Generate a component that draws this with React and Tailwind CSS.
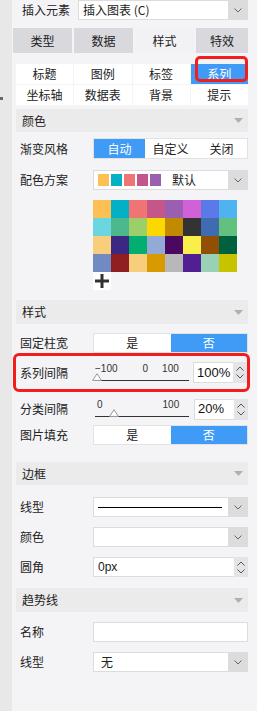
import React from "react";

const palette = [
  ["#fdc055", "#03b0c5", "#f07474", "#c5568a", "#9b5fb1", "#d061d6", "#5b79e8", "#4fb3f0"],
  ["#6bd6e0", "#4cb88c", "#9ccf6a", "#fdd800", "#c28a00", "#333333", "#3f6bb0", "#64c07e"],
  ["#f8ce7c", "#3b2884", "#00af70", "#93aad7", "#4a0860", "#f9ef4a", "#904f05", "#00613f"],
  ["#728ac2", "#8f1f21", "#f8cd7c", "#d89a00", "#b8b8b8", "#511e93", "#99d1b6", "#c8c300"],
];

const Chevron = () => (
  <svg width="8" height="5" viewBox="0 0 8 5">
    <polyline points="0.5,0.5 4,4 7.5,0.5" fill="none" stroke="#666" strokeWidth="1" />
  </svg>
);

const Spinner = () => (
  <div className="w-[14px] self-stretch bg-[#e4e4e6] flex flex-col items-center justify-center gap-[3px]">
    <svg width="8" height="5" viewBox="0 0 8 5">
      <polyline points="0.5,4.5 4,1 7.5,4.5" fill="none" stroke="#555" strokeWidth="1" />
    </svg>
    <svg width="8" height="5" viewBox="0 0 8 5">
      <polyline points="0.5,0.5 4,4 7.5,0.5" fill="none" stroke="#555" strokeWidth="1" />
    </svg>
  </div>
);

const SectionHeader = ({ title, className = "" }) => (
  <div className={`h-[23px] bg-[#ebebeb] flex items-center justify-between pl-[6px] pr-[5px] ${className}`}>
    <span className="text-[12px] text-[#222]">{title}</span>
    <svg width="9" height="5" viewBox="0 0 9 5">
      <polygon points="0,0 9,0 4.5,5" fill="#b0b0b0" />
    </svg>
  </div>
);

const Row = ({ label, children, className = "" }) => (
  <div className={`flex items-center h-[20px] ${className}`}>
    <div className="w-[77px] pl-[4px] text-[12px] text-[#222] shrink-0">{label}</div>
    <div className="flex-1 flex self-stretch">{children}</div>
  </div>
);

const SelectBox = ({ children }) => (
  <div className="flex flex-1 bg-white border border-[#dcdcdc] border-r-0">
    <div className="flex-1 flex items-center pl-[4px] min-w-0">{children}</div>
    <div className="w-[20px] bg-[#dcdcdc] flex items-center justify-center">
      <Chevron />
    </div>
  </div>
);

const Segmented = ({ items, active }) => (
  <div className="flex flex-1 bg-white border border-[#e2e2e2]">
    {items.map((it, i) => (
      <div
        key={it}
        className={`flex-1 flex items-center justify-center text-[12px] ${
          i === active ? "bg-[#3f9bf6] text-white" : "text-[#222]"
        }`}
      >
        {it}
      </div>
    ))}
  </div>
);

const Slider = ({ labels, thumb }) => (
  <div className="relative w-[94px] h-[26px] ml-[2px]">
    <div className="flex text-[10px] leading-[10px] text-[#333] font-['Liberation_Sans',sans-serif] pt-[4px]">
      {labels}
    </div>
    <div className="mt-[6px] h-px bg-[#333]" />
    <svg
      className="absolute top-[13px]"
      style={{ left: thumb }}
      width="10"
      height="8"
      viewBox="0 0 10 8"
    >
      <polygon points="5,0.7 9.4,7.4 0.6,7.4" fill="white" stroke="#999" strokeWidth="1" />
    </svg>
  </div>
);

const NumberBox = ({ value }) => (
  <div className="ml-auto flex h-[21px] self-center">
    <div className="w-[40px] bg-white border border-[#dcdcdc] border-r-0 flex items-center pl-[3px] text-[13px] text-[#111] font-['Liberation_Sans',sans-serif]">
      {value}
    </div>
    <Spinner />
  </div>
);

export default function App() {
  return (
    <div className="flex w-[257px] h-[711px] overflow-hidden font-['Noto_Sans_CJK_SC',sans-serif] text-[#222]">
      <div className="w-[12px] bg-[#e8e8e8] shrink-0">
        <div className="mt-[97px] w-[3px] h-[3px] bg-[#666]" />
      </div>

      <div className="flex-1 bg-[#f4f4f6] pl-[4px] pr-[9px]">
        {/* insert element */}
        <div className="flex items-center h-[20px]">
          <div className="w-[62px] pl-[6px] text-[12px]">插入元素</div>
          <SelectBox>
            <span className="text-[12px]">插入图表 (C)</span>
          </SelectBox>
        </div>

        {/* main tabs */}
        <div className="flex gap-[2px] ml-[-3px] mt-[8px] h-[25px]">
          <div className="w-[59px] bg-[#d9d9dd] flex items-center justify-center text-[12px]">类型</div>
          <div className="w-[59px] bg-[#d9d9dd] flex items-center justify-center text-[12px]">数据</div>
          <div className="w-[59px] bg-[#f2f2f4] flex items-center justify-center text-[12px]">样式</div>
          <div className="flex-1 bg-[#d9d9dd] flex items-center justify-center text-[12px]">特效</div>
        </div>

        {/* sub tabs */}
        <div className="relative mt-[11px] grid grid-cols-4 gap-px">
          {["标题", "图例", "标签", "系列", "坐标轴", "数据表", "背景", "提示"].map((t) => (
            <div
              key={t}
              className={`h-[20px] flex items-center justify-center text-[12px] ${
                t === "系列" ? "bg-[#3f9bf6] text-white" : "bg-white"
              }`}
            >
              {t}
            </div>
          ))}
          <div className="absolute left-[179px] top-[-8px] w-[53px] h-[26px] border-[3px] border-[#f21d1d] rounded-[5px]" />
        </div>

        {/* colour */}
        <SectionHeader title="颜色" className="mt-[4px]" />
        <Row label="渐变风格" className="mt-[6px] h-[21px]">
          <Segmented items={["自动", "自定义", "关闭"]} active={0} />
        </Row>
        <Row label="配色方案" className="mt-[11px]">
          <SelectBox>
            <div className="flex gap-[2px]">
              {palette[0].slice(0, 5).map((c) => (
                <div key={c} className="w-[11px] h-[12px]" style={{ backgroundColor: c }} />
              ))}
            </div>
            <span className="ml-[11px] text-[12px]">默认</span>
          </SelectBox>
        </Row>
        <div className="ml-[77px] mt-[10px]">
          <div className="grid grid-cols-[repeat(8,18px)]">
            {palette.flat().map((c, i) => (
              <div key={i} className="w-[18px] h-[18px]" style={{ backgroundColor: c }} />
            ))}
          </div>
          <div className="w-[18px] h-[18px] bg-white flex items-center justify-center">
            <svg width="14" height="14" viewBox="0 0 14 14">
              <rect x="5.5" y="0" width="3" height="14" fill="#333" />
              <rect x="0" y="5.5" width="14" height="3" fill="#333" />
            </svg>
          </div>
        </div>

        {/* style */}
        <SectionHeader title="样式" className="mt-[10px] h-[24px]" />
        <Row label="固定柱宽" className="mt-[9px]">
          <Segmented items={["是", "否"]} active={1} />
        </Row>
        <div className="ml-[-3px] mr-[-2px] h-[39px] border-[3px] border-[#f21d1d] rounded-[6px] flex items-center">
          <div className="w-[77px] pl-[4px] text-[12px] shrink-0">系列间隔</div>
          <Slider
            thumb={-3}
            labels={
              <>
                <span>−100</span>
                <span className="ml-[25px]">0</span>
                <span className="ml-[14px]">100</span>
              </>
            }
          />
          <NumberBox value="100%" />
        </div>
        <div className="flex items-center h-[20px] mt-[7px]">
          <div className="w-[77px] pl-[4px] text-[12px] shrink-0">分类间隔</div>
          <Slider
            thumb={14}
            labels={
              <>
                <span className="ml-[2px]">0</span>
                <span className="ml-[60px]">100</span>
              </>
            }
          />
          <NumberBox value="20%" />
        </div>
        <Row label="图片填充" className="mt-[6px]">
          <Segmented items={["是", "否"]} active={1} />
        </Row>

        {/* border */}
        <SectionHeader title="边框" className="mt-[17px]" />
        <Row label="线型" className="mt-[12px]">
          <SelectBox>
            <div className="w-[124px] h-px bg-black" />
          </SelectBox>
        </Row>
        <Row label="颜色" className="mt-[10px]">
          <SelectBox />
        </Row>
        <Row label="圆角" className="mt-[10px]">
          <div className="flex flex-1">
            <div className="flex-1 bg-white border border-[#dcdcdc] border-r-0 flex items-center pl-[4px] text-[12px] font-['Liberation_Sans',sans-serif]">
              0px
            </div>
            <Spinner />
          </div>
        </Row>

        {/* trend line */}
        <SectionHeader title="趋势线" className="mt-[11px] h-[24px]" />
        <Row label="名称" className="mt-[10px]">
          <div className="flex-1 bg-white border border-[#dcdcdc]" />
        </Row>
        <Row label="线型" className="mt-[10px]">
          <SelectBox>
            <span className="text-[12px] ml-[3px]">无</span>
          </SelectBox>
        </Row>
      </div>
    </div>
  );
}
